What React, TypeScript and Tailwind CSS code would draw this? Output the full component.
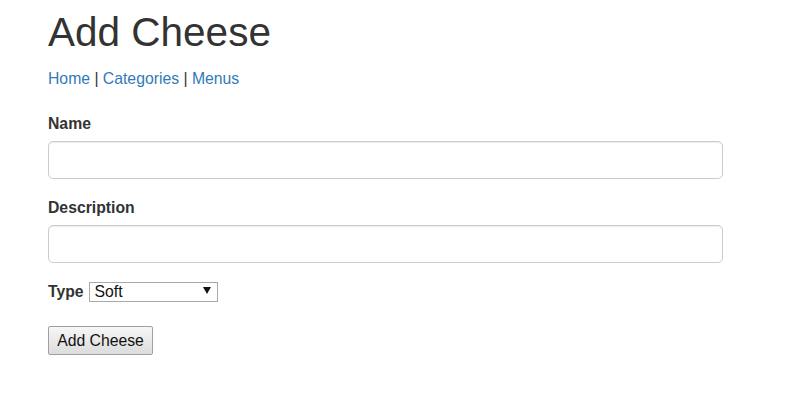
export default function App() {
  return (
    <div className="min-h-screen bg-white pl-[48px] pt-[10px] text-[#333] font-['Liberation_Sans',Arial,sans-serif]">
      <h1 className="text-[40.5px] leading-[44px] font-normal">Add Cheese</h1>

      <nav className="mt-[13.5px] text-[15.75px] leading-[22px]">
        <a href="#" className="text-[#337ab7] hover:underline">Home</a>
        {" | "}
        <a href="#" className="text-[#337ab7] hover:underline">Categories</a>
        {" | "}
        <a href="#" className="text-[#337ab7] hover:underline">Menus</a>
      </nav>

      <form className="mt-[23px] w-[675px]" onSubmit={(e) => e.preventDefault()}>
        <div className="mb-[17.5px]">
          <label className="block text-[15.75px] leading-[22px] font-bold mb-[6.5px]">Name</label>
          <input
            type="text"
            className="block w-full h-[38px] px-3 border border-[#ccc] rounded-[5px] shadow-[inset_0_1px_1px_rgba(0,0,0,0.075)] text-[16px] outline-none focus:border-[#66afe9]"
          />
        </div>

        <div className="mb-[17.5px]">
          <label className="block text-[15.75px] leading-[22px] font-bold mb-[6.5px]">Description</label>
          <input
            type="text"
            className="block w-full h-[38px] px-3 border border-[#ccc] rounded-[5px] shadow-[inset_0_1px_1px_rgba(0,0,0,0.075)] text-[16px] outline-none focus:border-[#66afe9]"
          />
        </div>

        <div className="flex items-center h-[22px] text-[15.75px]">
          <label className="font-bold mr-[5px] leading-[22px]">Type</label>
          <div className="relative">
            <select className="appearance-none w-[129px] h-[20px] pl-[5px] border border-[#a9a9a9] bg-white text-[15.75px] leading-[18px] text-[#111] outline-none">
              <option>Soft</option>
              <option>Hard</option>
              <option>Fake</option>
            </select>
            <span className="pointer-events-none absolute right-[7px] top-[7px] w-0 h-0 border-l-[4px] border-r-[4px] border-t-[7px] border-l-transparent border-r-transparent border-t-[#111]" />
          </div>
        </div>

        <button
          type="submit"
          className="mt-[23px] h-[29px] w-[105px] border border-[#a0a0a0] rounded-[2px] bg-gradient-to-b from-[#f6f6f6] to-[#dcdcdc] text-[15.75px] leading-[27px] text-[#111]"
        >
          Add Cheese
        </button>
      </form>
    </div>
  );
}
